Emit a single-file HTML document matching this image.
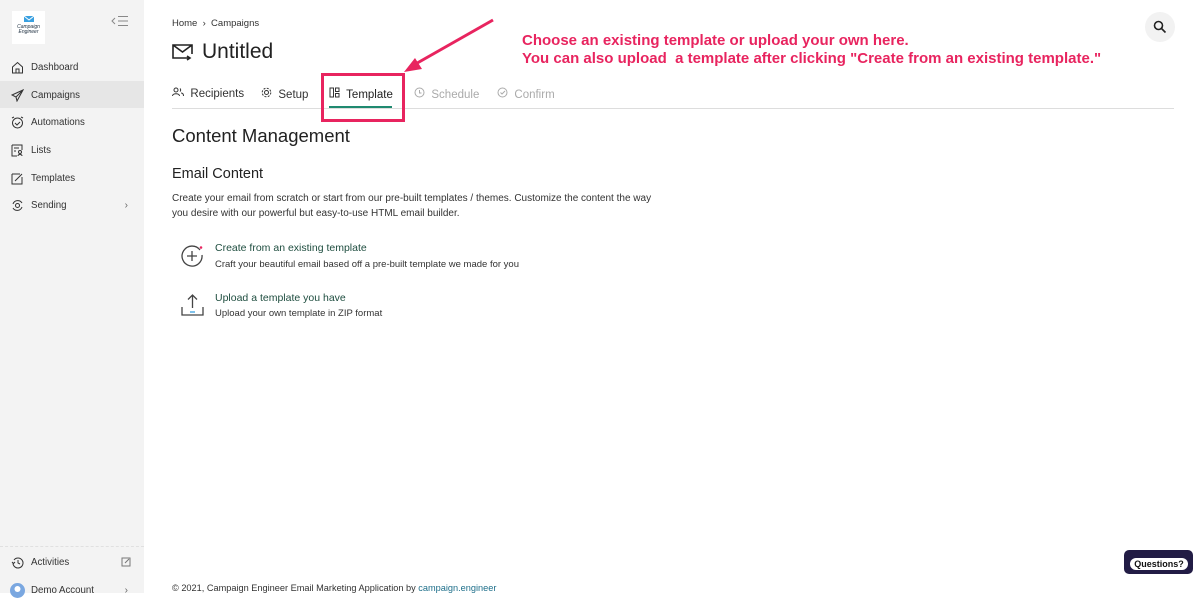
<!DOCTYPE html>
<html><head><meta charset="utf-8"><style>
*{margin:0;padding:0;box-sizing:border-box}
body{width:1200px;height:593px;overflow:hidden;background:#fff;font-family:"Liberation Sans",sans-serif;color:#222;position:relative}
.sb{position:absolute;left:0;top:0;width:144px;height:593px;background:#f3f3f3}
.logo{position:absolute;left:12px;top:11px;width:33px;height:33px;background:#fff;font-size:5px;color:#234;text-align:center;padding-top:14px;line-height:5px;font-style:italic}
.nav{position:absolute;left:0;width:144px;height:27px;font-size:9.7px;color:#333;display:flex;align-items:center;padding-left:31px;padding-top:2px}
.nav svg{position:absolute;left:11px;top:8px}
.nav.act{background:#e6e6e6}
.chev{position:absolute;right:16px;font-size:10px;color:#666}
.abs{position:absolute;white-space:nowrap}
.tab{position:absolute;top:87px;font-size:11.5px;color:#333}
.tab.dis{color:#aaa}
.ann{position:absolute;left:522px;font-size:15px;font-weight:bold;color:#e8245f;text-shadow:0 0 2px #fff,0 0 2px #fff;white-space:nowrap}
</style></head><body>
<div class="sb">
<div class="logo"><svg width="12" height="8" style="position:absolute;left:11px;top:4px" viewBox="0 0 12 8"><path d="M1 1h10v6H1z" fill="#3aa0e0"/><path d="M1 1l5 4 5-4" stroke="#fff" fill="none"/></svg>Campaign<br>Engineer</div>
<svg class="abs" style="left:111px;top:15px" width="18" height="12" viewBox="0 0 18 12" stroke="#888" fill="none" stroke-width="1"><path d="M4 3L1 6l3 3M7 1.5h10M7 6h10M7 10.5h10"/></svg>
<div class="nav" style="top:53px"><svg width="13" height="13" viewBox="0 0 13 13" fill="none" stroke="#333"><path d="M1.5 6L6.5 1.5 11.5 6v6h-10z M5 12V8h3v4"/></svg>Dashboard</div>
<div class="nav act" style="top:81px"><svg width="13" height="13" viewBox="0 0 13 13" fill="none" stroke="#333"><path d="M12 1L1 6l4 2 1 4 6-11zM5 8l7-7"/></svg>Campaigns</div>
<div class="nav" style="top:108px"><svg width="13" height="13" viewBox="0 0 13 13" fill="none" stroke="#333"><circle cx="6.5" cy="7" r="5"/><path d="M4 7l2 2 3-3M1 2l2-1M12 2l-2-1"/></svg>Automations</div>
<div class="nav" style="top:136px"><svg width="13" height="13" viewBox="0 0 13 13" fill="none" stroke="#333"><path d="M1 1h10v5M1 1v11h5M3 4h5M3 7h2"/><circle cx="9" cy="8" r="1.5"/><path d="M7 12c0-2 4-2 4 0"/></svg>Lists</div>
<div class="nav" style="top:164px"><svg width="13" height="13" viewBox="0 0 13 13" fill="none" stroke="#333"><path d="M1 2h8M1 2v10h10V5M4 9l7-7"/></svg>Templates</div>
<div class="nav" style="top:191px"><svg width="13" height="13" viewBox="0 0 13 13" fill="none" stroke="#333"><path d="M2 5a5 5 0 0 1 9-1M11 8a5 5 0 0 1-9 1"/><circle cx="6.5" cy="6.5" r="2"/></svg>Sending<span class="chev">›</span></div>
<div style="position:absolute;left:0;top:546px;width:144px;border-top:1px dashed #e0e0e0"></div>
<div class="nav" style="top:548px"><svg width="13" height="13" viewBox="0 0 13 13" fill="none" stroke="#333"><path d="M3 4a5 5 0 1 1-1 3M1 6l1.5 1.5L4 6M7 4v3l2 1"/></svg>Activities<svg style="left:auto;right:13px;top:9px;position:absolute" width="10" height="10" viewBox="0 0 10 10" fill="none" stroke="#777"><path d="M1 1h8v8H1zM4 6l4-4"/></svg></div>
<div class="nav" style="top:576px"><svg width="15" height="15" viewBox="0 0 15 15" style="left:10px;top:7px"><circle cx="7.5" cy="7.5" r="7.5" fill="#7aa7e0"/><circle cx="7.5" cy="6" r="3" fill="#fff"/></svg>Demo Account<span class="chev">›</span></div>
</div>
<div class="abs" style="left:172px;top:18px;font-size:9.5px;color:#333">Home &nbsp;›&nbsp; Campaigns</div>
<svg class="abs" style="left:172px;top:44px" width="22" height="18" viewBox="0 0 22 18" fill="none" stroke="#222" stroke-width="1.6"><path d="M16 14H1V1h19v9M1 1l9.5 7L20 1M15 16l3-2-3-2M12 14h6"/></svg>
<div class="abs" style="left:202px;top:40px;font-size:21px;color:#222">Untitled</div>
<div class="abs" style="left:1145px;top:12px;width:30px;height:30px;border-radius:50%;background:#f2f2f2"><svg style="position:absolute;left:8px;top:8px" width="14" height="14" viewBox="0 0 14 14" fill="none" stroke="#222" stroke-width="1.6"><circle cx="5.5" cy="5.5" r="4"/><path d="M8.5 8.5l4 4"/></svg></div>
<div class="tab" style="left:172px"><svg width="12" height="10" viewBox="0 0 12 10" fill="none" stroke="#333"><circle cx="4" cy="3" r="2"/><path d="M0.5 9c0-3 7-3 7 0M8 1.5a2 2 0 0 1 0 3M9 6c2 0 2.5 1.5 2.5 3"/></svg>&nbsp; Recipients</div>
<div class="tab" style="left:261px"><svg width="11" height="11" viewBox="0 0 11 11" fill="none" stroke="#333"><circle cx="5.5" cy="5.5" r="2"/><circle cx="5.5" cy="5.5" r="4.3" stroke-dasharray="2 1.4"/></svg>&nbsp; Setup</div>
<div class="tab" style="left:329px;color:#222"><svg width="11" height="11" viewBox="0 0 11 11" fill="none" stroke="#333"><path d="M1 1h3.5v9H1zM6.5 1H10v3.5H6.5zM6.5 6.5H10V10H6.5z"/></svg>&nbsp; Template</div>
<div class="abs" style="left:329px;top:106px;width:63px;height:2px;background:#1f8a70"></div>
<div class="tab dis" style="left:414px"><svg width="11" height="11" viewBox="0 0 11 11" fill="none" stroke="#aaa"><circle cx="5.5" cy="5.5" r="4.5"/><path d="M5.5 3v3h2"/></svg>&nbsp; Schedule</div>
<div class="tab dis" style="left:497px"><svg width="11" height="11" viewBox="0 0 11 11" fill="none" stroke="#aaa"><circle cx="5.5" cy="5.5" r="4.5"/><path d="M3.5 5.5l1.5 1.5 3-3"/></svg>&nbsp; Confirm</div>
<div class="abs" style="left:172px;top:108px;width:1002px;height:1px;background:#ddd"></div>
<div class="abs" style="left:321px;top:73px;width:84px;height:49px;border:3px solid #e8245f"></div>
<div class="abs" style="left:172px;top:125px;font-size:18.5px;color:#222">Content Management</div>
<div class="abs" style="left:172px;top:166px;font-size:14.5px;color:#222">Email Content</div>
<div class="abs" style="left:172px;top:192px;font-size:10px;color:#333;line-height:14.5px">Create your email from scratch or start from our pre-built templates / themes. Customize the content the way<br>you desire with our powerful but easy-to-use HTML email builder.</div>
<svg class="abs" style="left:181px;top:244px" width="24" height="24" viewBox="0 0 24 24" fill="none" stroke="#444" stroke-width="1.3"><path d="M19 6A10 10 0 1 0 21 11"/><path d="M11 7v10M6 12h10"/><circle cx="20" cy="3.5" r="1.3" fill="#e8245f" stroke="none"/></svg>
<div class="abs" style="left:215px;top:242px;font-size:10.5px;color:#1e4d3f">Create from an existing template</div>
<div class="abs" style="left:215px;top:259px;font-size:9.5px;color:#333">Craft your beautiful email based off a pre-built template we made for you</div>
<svg class="abs" style="left:181px;top:293px" width="24" height="24" viewBox="0 0 24 24" fill="none" stroke="#444" stroke-width="1.3"><path d="M1 14v8h21v-8M11.5 15V2M7 6.5l4.5-4.5 4.5 4.5"/><path d="M9 19h5" stroke="#3aa0e0"/></svg>
<div class="abs" style="left:215px;top:292px;font-size:10.5px;color:#1e4d3f">Upload a template you have</div>
<div class="abs" style="left:215px;top:308px;font-size:9.5px;color:#333">Upload your own template in ZIP format</div>
<div class="abs" style="left:172px;top:583px;font-size:9.2px;color:#333">© 2021, Campaign Engineer Email Marketing Application by <span style="color:#1e6f8a">campaign.engineer</span></div>
<div class="abs" style="left:1124px;top:550px;width:69px;height:24px;background:#221c45;border-radius:5px"><div style="position:absolute;left:6px;top:8px;width:58px;height:12px;background:#fff;border-radius:6px;font-size:9px;font-weight:bold;text-align:center;line-height:13px;color:#111">Questions?</div></div>
<svg class="abs" style="left:400px;top:15px" width="100" height="65" viewBox="400 15 100 65"><path d="M493 20L412 66" stroke="#e8245f" stroke-width="3"/><path d="M404 72l18-3-7-11z" fill="#e8245f"/></svg>
<div class="ann" style="top:32px">Choose an existing template or upload your own here.</div>
<div class="ann" style="top:50px">You can also upload &nbsp;a template after clicking "Create from an existing template."</div>
</body></html>
